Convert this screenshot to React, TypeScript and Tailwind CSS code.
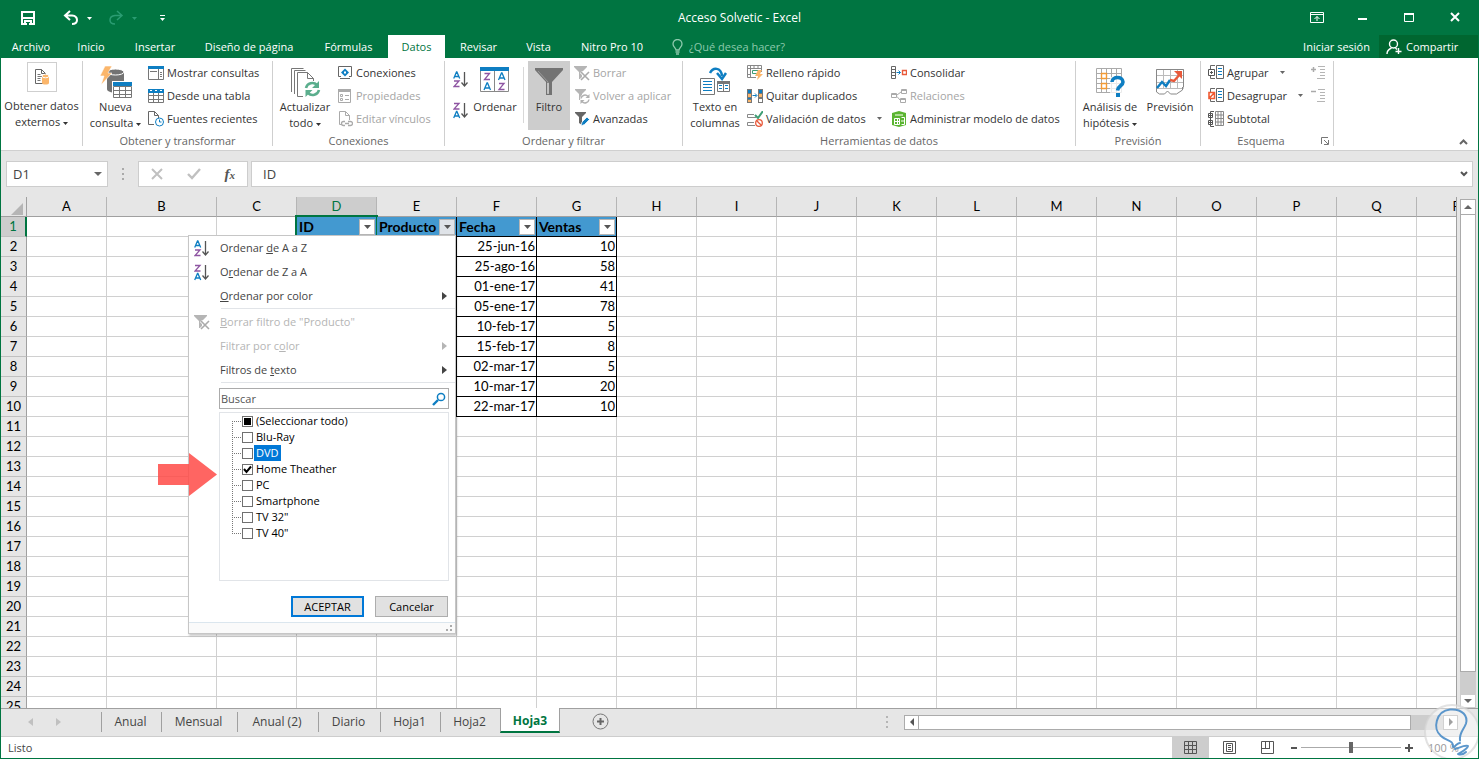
import type { ReactNode } from 'react';
import clsx from 'clsx';

interface IconProps {
  children: ReactNode;
  width?: number;
  height?: number;
}

const Icon = ({ children, width = 16, height = 16 }: IconProps) => (
  <svg width={width} height={height} viewBox={`0 0 ${width} ${height}`} fill="none" className="shrink-0" aria-hidden="true">
    {children}
  </svg>
);

const Caret = () => (
  <svg width="5" height="3" viewBox="0 0 5 3" className="inline-block shrink-0 align-middle" aria-hidden="true">
    <path d="M0 0h5L2.5 3z" fill="currentColor" />
  </svg>
);

const SaveIcon = () => (
  <Icon>
    <path d="M2 2h12v12H2z" stroke="#fff" strokeWidth="2" />
    <path d="M2 8h12M5 11h6v3H5z" stroke="#fff" strokeWidth="2" />
    <path d="M7 12h2v3H7z" fill="#007541" />
  </Icon>
);

const UndoIcon = () => (
  <Icon>
    <path d="M7 1 2 5.500 7 10M2.500 5.500H9q5 .5 5 4.500t-5 4" stroke="currentColor" strokeWidth="2" />
  </Icon>
);

const RedoIcon = () => (
  <Icon>
    <path d="m9 1 5 4.500L9 10M13.500 5.500H7Q2 6 2 10t5 4" stroke="currentColor" strokeWidth="1.500" />
  </Icon>
);

const ExternalDataIcon = () => (
  <Icon width={18} height={18}>
    <path d="M2.500 1.500h6l4 4v10h-10zM8.500 1.500v4h4" stroke="#666" />
    <path d="M4.500 6.500h3M4.500 8.500h5M4.500 10.500h3M4.500 12.500h3" stroke="#777" />
    <path d="M9 8v7c0 2 7 2 7 0V8z" fill="#fbb66b" />
    <ellipse cx="12.500" cy="8" rx="3.500" ry="1.800" fill="#fbb66b" stroke="#fff" />
  </Icon>
);

const NewQueryIcon = () => (
  <Icon width={32} height={32}>
    <path d="M7 6v17c0 5 17 5 17 0V6z" fill="#737373" />
    <ellipse cx="15.500" cy="6" rx="8.500" ry="3" fill="#737373" stroke="#fff" strokeWidth="1" />
    <path d="M5 0h7L8 7h4L1 19l3-9H0z" fill="#fbb66b" stroke="#fff" strokeWidth=".6" />
    <path d="M12 15h20v17H12z" fill="#fff" />
    <path d="M13.500 20.500h18v11h-18zM19.500 20v11M25.500 20v11M13 24.500h18M13 28.500h18" stroke="#777" />
    <path d="M13 16h19v4H13z" fill="#0e7ec2" />
  </Icon>
);

const ShowQueriesIcon = () => (
  <Icon>
    <path d="M.5 1.500h15v13H.5zM10.500 4v10M2 6.500h7M12 7.500h2M12 9.500h2M12 11.500h2" stroke="#777" />
    <path d="M0 1h16v3H0z" fill="#0e7ec2" />
  </Icon>
);

const FromTableIcon = () => (
  <Icon>
    <path d="M.5 1.500h15v13H.5zM5.500 4v10M10.500 4v10M0 7.500h16M0 11.500h16" stroke="#777" />
    <path d="M0 1h16v4H0z" fill="#0e7ec2" />
    <path d="M2 2.500h2M7 2.500h2M12 2.500h2" stroke="#fff" />
  </Icon>
);

const RecentSourcesIcon = () => (
  <Icon>
    <path d="M6 13.500H.5V.5h6l4 4V7M6.500.5v4h4" stroke="#666" />
    <circle cx="11.500" cy="11" r="4" fill="#fff" stroke="#0e7ec2" />
    <path d="M11.500 8.500V11h2" stroke="#0e7ec2" />
  </Icon>
);

const RefreshAllIcon = () => (
  <Icon width={32} height={32}>
    <path d="M2.500 26V2.500h12M5.500 28V4.500h11M14 30.500H8.500v-24h10l6 6V15M18.500 6.500v6h6" stroke="#777" />
    <path d="M17 22a6.500 6.500 0 0 1 11-3M30 24a6.500 6.500 0 0 1-11 3" stroke="#5bae8d" strokeWidth="2.600" />
    <path d="M30 15v7h-7zM16.500 31v-7h7z" fill="#5bae8d" />
  </Icon>
);

const ConnectionsIcon = () => (
  <Icon>
    <path d="M4 11.500H1.500v-10h13v10H12M3 13.500h10" stroke="#666" />
    <path d="m8 3.500 2 2 2 2-4 4-4-4z" fill="#0e7ec2" />
    <path d="M7 6.500h2v2H7z" fill="#fff" />
  </Icon>
);

const PropertiesIcon = () => (
  <Icon>
    <path d="M1.500 1.500h12v13h-12z" stroke="#aaa" />
    <path d="M1 1h13v3H1z" fill="#aaa" />
    <path d="M3.500 6.500h2v2h-2zM3.500 10.500h2v2h-2zM8 7.500h4M8 11.500h4" stroke="#aaa" />
  </Icon>
);

const EditLinksIcon = () => (
  <Icon>
    <path d="M5 13.500H2.500V.5h6l4 4V9M8.500.5v4h4" stroke="#aaa" />
    <path d="M8 10.500H6.500a2 2 0 0 0 0 4H8M11 10.500h2.500a2 2 0 0 1 0 4H11M8 12.500h4" stroke="#aaa" strokeWidth="1.300" />
  </Icon>
);

const SortIcon = ({ reverse = false }: { reverse?: boolean }) => (
  <Icon width={15} height={17}>
    <path
      d={reverse ? 'm.7 16 2.800-6.500h.4l2.800 6.500M1.700 14h4' : 'm.7 7.500 2.800-6.500h.4l2.800 6.500M1.700 5.500h4'}
      stroke="#0e7ec2"
      strokeWidth="1.300"
    />
    <path d={reverse ? 'M1 1.500h5L1 7h5.500' : 'M1 10h5l-5 5.500h5.500'} stroke="#8e55a2" strokeWidth="1.300" />
    <path d="M11.500 1v13M8.500 11.500l3 3.500 3-3.500" stroke="#555" strokeWidth="1.300" />
  </Icon>
);

const SortDialogIcon = () => (
  <Icon width={30} height={30}>
    <path d="M.5 1.500h28v23H.5zM14.500 4v20" stroke="#888" />
    <path d="M0 0h29v4H0z" fill="#0e7ec2" />
    <path d="M4.500 6.500h5l-5 6H10M19 16.500h5l-5 6h5.500" stroke="#8e55a2" strokeWidth="1.300" />
    <path d="m4 23 3-7h.5l3 7M5 21h4.500M18.500 13l3-7h.5l3 7M19.500 11h4.500" stroke="#0e7ec2" strokeWidth="1.300" />
  </Icon>
);

const FilterIcon = () => (
  <Icon width={28} height={30}>
    <path d="M0 1h28v2L17 15v13h-6V15L0 3z" fill="#737373" />
    <path d="m3 4 10 11v11" stroke="#999" />
    <path d="M13 16v11" stroke="#fff" />
  </Icon>
);

const ClearFilterIcon = () => (
  <Icon>
    <path d="M0 1h13v1L8 7v7H5V7L0 2z" fill="#b5b5b5" />
    <path d="m7 7 8 8M15 7l-8 8" stroke="#fff" strokeWidth="3" />
    <path d="m7 7 8 8M15 7l-8 8" stroke="#aaa" strokeWidth="1.600" />
  </Icon>
);

const ReapplyIcon = () => (
  <Icon>
    <path d="M1 1h11v1L8 6v6H5V6L1 2z" fill="#b5b5b5" />
    <circle cx="11" cy="11" r="5" fill="#fff" />
    <path d="M7 10.500a4 4 0 0 1 7-2M15 11.500a4 4 0 0 1-7 2" stroke="#b0b0b0" strokeWidth="1.500" />
    <path d="M15.500 6v4h-4zM6.500 16v-4h4z" fill="#b0b0b0" />
  </Icon>
);

const AdvancedIcon = () => (
  <Icon>
    <path d="M1 1h11v1L8 6v8l-3-2V6L1 2z" fill="#666" />
    <path d="m7 15 1-4 5-5 2.500 2.500-5 5z" fill="#0e7ec2" stroke="#fff" strokeWidth=".8" />
  </Icon>
);

const TextToColumnsIcon = () => (
  <Icon width={32} height={30}>
    <path d="M1.500 11.500h14v16h-14z" stroke="#777" />
    <path d="M4 14.500h9M4 17.500h9M4 20.500h9M4 23.500h9" stroke="#0e7ec2" />
    <path d="M18.500 14.500h12v10h-12zM24.500 15v9" stroke="#777" />
    <path d="M18 14h13v3H18z" fill="#777" />
    <path d="M20 18.500h3M26 18.500h3M20 21.500h3M26 21.500h3" stroke="#0e7ec2" />
    <path d="M11 6c3-6 11-6 12 3" stroke="#0e7ec2" strokeWidth="2.500" />
    <path d="m18 6 5 6 4-6" stroke="#0e7ec2" strokeWidth="2.500" />
  </Icon>
);

const FlashFillIcon = () => (
  <Icon>
    <path d="M9 12.500H.5v-12h14V7M0 3.500h14M3.500 0v12M0 9.500h4M7 .5v3M11 .5v3" stroke="#888" />
    <path d="M5.500 5.500h6v3h-6z" stroke="#3e9e74" />
    <path d="M11 5h4l-2 4h3l-6 6 1-4H8z" fill="#fbb66b" />
  </Icon>
);

const RemoveDuplicatesIcon = () => (
  <Icon>
    <path d="M0 1h5v14H0zM11 1h5v14h-5z" fill="#777" />
    <path d="M1 2h3v3H1zM1 10h3v1H1zM12 2h3v3h-3z" fill="#0e7ec2" />
    <path d="M1 6h3v3H1zM1 12h3v2H1zM12 6h3v3h-3z" fill="#fbb66b" />
    <path d="M12 11h3v3h-3z" fill="#fff" />
    <path d="M5.500 7.500h4M8 5.500l2 2-2 2" stroke="#0e7ec2" />
  </Icon>
);

const ValidationIcon = () => (
  <Icon>
    <path d="M9 6.500H.5v-3H7M8 14.500H.5v-3H7" stroke="#888" />
    <path d="m8 4 3 3 5-7" stroke="#3e9e74" strokeWidth="2" />
    <circle cx="12" cy="12" r="3.300" stroke="#e8593a" strokeWidth="1.300" />
    <path d="m9.700 9.700 4.600 4.600" stroke="#e8593a" strokeWidth="1.300" />
  </Icon>
);

const ConsolidateIcon = () => (
  <Icon>
    <path d="M.5 1.500h4v12h-4zM0 4.500h5M0 7.500h5M0 10.500h5" stroke="#666" />
    <path d="M5.500 7.500h4M7.500 5.500l2 2-2 2" stroke="#0e7ec2" />
    <path d="M11.500 5.500h4v4h-4z" stroke="#e8593a" strokeWidth="1.400" />
  </Icon>
);

const RelationsIcon = () => (
  <Icon>
    <path d="M.5 5.500h5v4h-5zM10.500 1.500h5v4h-5zM9.500 10.500h5v4h-5zM6 7l4-3M6 8.500l3 3.500M10 2.500h5M0 6.500h5M9 11.500h5" stroke="#aaa" />
  </Icon>
);

const DataModelIcon = () => (
  <Icon>
    <path d="m8 0 7 2v12l-7 2-7-2V2z" fill="#5bb531" />
    <path d="M3.500 7.500h5v6h-5zM3 10.500h5M6.500 7v6M10.500 6.500h3v7h-3M10 10h4" stroke="#fff" />
    <path d="M4 4h8" stroke="#c8eab5" strokeWidth="1.500" />
  </Icon>
);

const WhatIfIcon = () => (
  <Icon width={32} height={32}>
    <path d="M2.500 2.500h25v24h-25zM7.500 2v24M12.500 2v24M17.500 2v24M22.500 2v24M2 7.500h25M2 12.500h25M2 17.500h25M2 22.500h25" stroke="#aaa" />
    <path d="M7.500 7.500h5v5h-5zM7.500 17.500h5v5h-5z" fill="#fff" stroke="#f39a33" strokeWidth="1.400" />
    <path d="M16 11h15v20H16z" fill="#fff" opacity=".75" />
    <path d="M18 16c0-6 11-6 11 0 0 4-5 3.500-5.500 8.500" stroke="#0e7ec2" strokeWidth="3.600" />
    <path d="M22 27h4v4h-4z" fill="#0e7ec2" />
  </Icon>
);

const ForecastIcon = () => (
  <Icon width={32} height={30}>
    <path d="M2.500 2.500h27v19h-27zM9.500 2v19M16.500 2v19M23.500 2v19M2 8.500h27M2 15.500h27" stroke="#bbb" />
    <path d="M2.500 25V2.500h27V20M2.500 25l3 2h5l3-3 3 3h6l6-4v-3" stroke="#888" />
    <path d="m3 21 5-6 4 4 4-6" stroke="#0e7ec2" strokeWidth="2.400" />
    <path d="m16 13 4 1 7-8" stroke="#e8593a" strokeWidth="2.400" />
    <path d="M20 4h8v8z" fill="#e8593a" />
  </Icon>
);

const OutlineIcon = ({ mode }: { mode: 'group' | 'ungroup' | 'subtotal' }) => (
  <Icon>
    {mode === 'subtotal' ? (
      <>
        <path d="M7.500.5h8v14h-8zM7 4h9M7 7.500h9M7 11h9M10 0v14M13 0v14" stroke="#888" />
        <path d="M.5 2.500h4v4h-4zM.5 9.500h4v4h-4zM1 4.500h3M2.500 3v3M1 11.500h3M2.500 10v3M2.500 2V.5H6M2.500 7v2M2.500 14v1.500H6" stroke="#555" />
      </>
    ) : (
      <>
        <path d="M8.500.5h7v13h-7zM2.500 4V.5H7M2.500 11v2.500H7" stroke="#666" />
        <path d="M10 3.500h4M10 6.500h4M10 9.500h4" stroke="#0e7ec2" />
        {mode === 'group' ? (
          <path d="M.5 4.500h6v6h-6zM2 7.500h3M3.500 6v3" stroke="#555" />
        ) : (
          <path d="M1 4.500h5.500v6H1zM1 10.500l5.500-6" stroke="#f05a32" strokeWidth="1.600" />
        )}
      </>
    )}
  </Icon>
);

const DetailIcon = ({ hide = false }: { hide?: boolean }) => (
  <Icon>
    <path d={hide ? 'M1 3.500h5' : 'M1 4.500h5M3.500 2v5'} stroke="#aaa" strokeWidth="1.500" />
    <path d="M8 1.500h7M10 4.500h5M10 7.500h5M10 10.500h5M7 13.500h8" stroke="#b5b5b5" />
  </Icon>
);

interface CommandProps {
  icon: ReactNode;
  label: string;
  disabled?: boolean;
  caret?: boolean;
}

const Command = ({ icon, label, disabled, caret }: CommandProps) => (
  <button
    type="button"
    disabled={disabled}
    className="flex h-[23px] items-center gap-[3px] whitespace-nowrap text-[#333] disabled:text-[#a5a5a5]"
  >
    {icon}
    {label}
    {caret ? <span className="ml-2 flex text-[#666]"><Caret /></span> : null}
  </button>
);

interface BigCommandProps {
  icon: ReactNode;
  lines: string[];
  caret?: boolean;
  className?: string;
}

const BigCommand = ({ icon, lines, caret, className }: BigCommandProps) => (
  <button type="button" className={clsx('flex shrink-0 flex-col items-center whitespace-nowrap pt-1 leading-4 text-[#333]', className)}>
    <span className="flex h-[34px] items-center">{icon}</span>
    {lines.map((line, index) => (
      <span key={line}>
        {line}
        {caret && index === lines.length - 1 ? <> <Caret /></> : null}
      </span>
    ))}
  </button>
);

interface GroupProps {
  label?: string;
  className?: string;
  launcher?: boolean;
  children: ReactNode;
}

const Group = ({ label, className, launcher, children }: GroupProps) => (
  <section className={clsx('mb-1 mt-[3px] flex shrink-0 flex-col border-r border-[#cfcfcf]', className)}>
    <div className="flex h-[74px] items-start">{children}</div>
    <div className="flex h-[11px] items-center leading-3 text-[#666]">
      <span className="flex-1 text-center">{label}</span>
      {launcher ? (
        <button type="button" aria-label="Configuración de esquema" className="mr-1 w-2">
          <Icon width={8} height={8}>
            <path d="M.5 7V.5H7M3 3l4 4M7.500 3v4.500H3" stroke="#777" />
          </Icon>
        </button>
      ) : null}
    </div>
  </section>
);

const TABS = [
  { name: 'Archivo', width: 'w-[60px]' },
  { name: 'Inicio', width: 'w-[60px]' },
  { name: 'Insertar', width: 'w-[68px]' },
  { name: 'Diseño de página', width: 'w-[120px]' },
  { name: 'Fórmulas', width: 'w-[79px]' },
  { name: 'Datos', width: 'w-[57px]', active: true },
  { name: 'Revisar', width: 'w-[67px]' },
  { name: 'Vista', width: 'w-[53px]' },
  { name: 'Nitro Pro 10', width: 'w-[94px]' },
];

const TitleBar = () => (
  <header className="bg-[#007541] text-white">
    <div className="flex h-[34px] items-center">
      <div className="flex flex-1 items-center">
        <button type="button" aria-label="Guardar" className="ml-[19px]"><SaveIcon /></button>
        <button type="button" aria-label="Deshacer" className="ml-[27px] flex items-center gap-2"><UndoIcon /><Caret /></button>
        <button type="button" aria-label="Rehacer" className="ml-4 flex items-center gap-2 text-[#2a9c72]"><RedoIcon /><Caret /></button>
        <button type="button" aria-label="Personalizar" className="ml-[22px]">
          <Icon width={7} height={8}><path d="M1 1.500h5" stroke="#fff" /><path d="M1 4h5L3.500 7z" fill="#fff" /></Icon>
        </button>
      </div>
      <h1 className="text-[12px]">Acceso Solvetic - Excel</h1>
      <div className="flex flex-1 justify-end">
        <button type="button" aria-label="Opciones de presentación" className="flex w-[46px] justify-center">
          <Icon width={14} height={12}><path d="M.5.5h13v10H.5zM1 2.500h12M7 9V4.500M4.500 7 7 4.500 9.500 7" stroke="#fff" /></Icon>
        </button>
        <button type="button" aria-label="Minimizar" className="flex w-[46px] justify-center">
          <Icon width={10} height={12}><path d="M0 7h9" stroke="#fff" strokeWidth="2" /></Icon>
        </button>
        <button type="button" aria-label="Maximizar" className="flex w-[46px] justify-center">
          <Icon width={10} height={12}><path d="M.5 1.500h9v8h-9z" stroke="#fff" /><path d="M0 1h10v2H0z" fill="#fff" /></Icon>
        </button>
        <button type="button" aria-label="Cerrar" className="flex w-[46px] justify-center">
          <Icon width={10} height={12}><path d="m1 1 8 8M9 1 1 9" stroke="#fff" strokeWidth="2" /></Icon>
        </button>
      </div>
    </div>
    <div className="flex h-[23px] items-stretch">
      <nav className="flex">
        {TABS.map((tab) => (
          <button
            key={tab.name}
            type="button"
            className={clsx('shrink-0 whitespace-nowrap text-center', tab.width, tab.active && 'bg-white text-[#007541]')}
          >
            {tab.name}
          </button>
        ))}
      </nav>
      <label className="ml-3 flex flex-1 items-center gap-1">
        <Icon width={14}>
          <path d="M5 11c0-2-3-3-3-6a4.500 4.500 0 0 1 9 0c0 3-3 4-3 6zM4.500 13h4M5 15h3" stroke="#8cc9ac" strokeWidth="1.300" />
        </Icon>
        <input placeholder="¿Qué desea hacer?" className="w-40 bg-transparent outline-none placeholder:text-[#8cc9ac]" />
      </label>
      <button type="button" className="mr-[9px] whitespace-nowrap">Iniciar sesión</button>
      <button type="button" className="flex w-[99px] items-center gap-1 whitespace-nowrap bg-[#006630] pl-[7px]">
        <Icon>
          <circle cx="7.500" cy="5" r="4" stroke="#fff" strokeWidth="1.400" />
          <path d="M1 15c0-3 2-5 4.500-6M9.500 9l1.500 1.500M12.500 9v6M9.500 12.500h6" stroke="#fff" strokeWidth="1.400" />
        </Icon>
        Compartir
      </button>
    </div>
  </header>
);

const Ribbon = () => (
  <div className="flex h-[93px] border-b border-[#d0d0d0] bg-white">
    <Group className="w-[82px]">
      <button type="button" className="flex w-full flex-col items-center whitespace-nowrap pt-px leading-4 text-[#333]">
        <span className="mb-[6px] flex size-[30px] items-center justify-center border border-[#cfcfcf]"><ExternalDataIcon /></span>
        <span>Obtener datos</span>
        <span>externos <Caret /></span>
      </button>
    </Group>
    <Group className="w-[190px]" label="Obtener y transformar">
      <BigCommand className="w-[65px]" icon={<NewQueryIcon />} lines={['Nueva', 'consulta']} caret />
      <div>
        <Command icon={<ShowQueriesIcon />} label="Mostrar consultas" />
        <Command icon={<FromTableIcon />} label="Desde una tabla" />
        <Command icon={<RecentSourcesIcon />} label="Fuentes recientes" />
      </div>
    </Group>
    <Group className="w-[172px]" label="Conexiones">
      <BigCommand className="w-16" icon={<RefreshAllIcon />} lines={['Actualizar', 'todo']} caret />
      <div>
        <Command icon={<ConnectionsIcon />} label="Conexiones" />
        <Command icon={<PropertiesIcon />} label="Propiedades" disabled />
        <Command icon={<EditLinksIcon />} label="Editar vínculos" disabled />
      </div>
    </Group>
    <Group className="w-[238px]" label="Ordenar y filtrar">
      <div className="flex w-[26px] flex-col gap-[14px] pl-2 pt-[10px]">
        <button type="button" aria-label="Ordenar de A a Z"><SortIcon /></button>
        <button type="button" aria-label="Ordenar de Z a A"><SortIcon reverse /></button>
      </div>
      <BigCommand className="w-12" icon={<SortDialogIcon />} lines={['Ordenar']} />
      <div className="ml-1 mt-[6px] h-14 border-l border-[#d8d8d8]" />
      <BigCommand className="ml-1 h-[69px] w-[42px] bg-[#cdcdcd]" icon={<FilterIcon />} lines={['Filtro']} />
      <div className="ml-1">
        <Command icon={<ClearFilterIcon />} label="Borrar" disabled />
        <Command icon={<ReapplyIcon />} label="Volver a aplicar" disabled />
        <Command icon={<AdvancedIcon />} label="Avanzadas" />
      </div>
    </Group>
    <Group className="w-[393px]" label="Herramientas de datos">
      <BigCommand className="w-16" icon={<TextToColumnsIcon />} lines={['Texto en', 'columnas']} />
      <div className="w-36">
        <Command icon={<FlashFillIcon />} label="Relleno rápido" />
        <Command icon={<RemoveDuplicatesIcon />} label="Quitar duplicados" />
        <Command icon={<ValidationIcon />} label="Validación de datos" caret />
      </div>
      <div>
        <Command icon={<ConsolidateIcon />} label="Consolidar" />
        <Command icon={<RelationsIcon />} label="Relaciones" disabled />
        <Command icon={<DataModelIcon />} label="Administrar modelo de datos" />
      </div>
    </Group>
    <Group className="w-[125px]" label="Previsión">
      <BigCommand className="w-[68px]" icon={<WhatIfIcon />} lines={['Análisis de', 'hipótesis']} caret />
      <BigCommand className="w-[52px]" icon={<ForecastIcon />} lines={['Previsión']} />
    </Group>
    <Group className="w-[133px]" label="Esquema" launcher>
      <div className="w-[103px] pl-[7px]">
        <Command icon={<OutlineIcon mode="group" />} label="Agrupar" caret />
        <Command icon={<OutlineIcon mode="ungroup" />} label="Desagrupar" caret />
        <Command icon={<OutlineIcon mode="subtotal" />} label="Subtotal" />
      </div>
      <div className="pl-[6px]">
        <button type="button" disabled aria-label="Mostrar detalle" className="flex h-[23px] items-center"><DetailIcon /></button>
        <button type="button" disabled aria-label="Ocultar detalle" className="flex h-[23px] items-center"><DetailIcon hide /></button>
      </div>
    </Group>
    <div className="flex flex-1 items-end justify-end pb-1 pr-[10px]">
      <button type="button" aria-label="Contraer la cinta">
        <Icon width={9} height={8}><path d="m1 6 3.500-3.500L8 6" stroke="#666" strokeWidth="2" /></Icon>
      </button>
    </div>
  </div>
);

const FormulaBar = () => (
  <div className="flex items-center px-[5px] py-[10px]">
    <div className="flex h-[26px] w-[102px] items-center border border-[#cdcdcd] bg-white pr-[5px]">
      <input aria-label="Cuadro de nombres" defaultValue="D1" className="w-full min-w-0 pl-[6px] text-[13px] text-[#444] outline-none" />
      <Icon width={8} height={5}><path d="M0 0h8L4 4z" fill="#666" /></Icon>
    </div>
    <span className="flex w-[30px] justify-center">
      <Icon width={2} height={12}><path d="M0 1h2M0 6h2M0 11h2" stroke="#aaa" strokeWidth="2" /></Icon>
    </span>
    <div className="flex h-[26px] w-[110px] items-center justify-around border border-[#cdcdcd] bg-white">
      <button type="button" aria-label="Cancelar edición"><Icon width={12} height={12}><path d="m1 1 10 10M11 1 1 11" stroke="#c0c0c0" strokeWidth="2" /></Icon></button>
      <button type="button" aria-label="Introducir"><Icon width={14} height={12}><path d="m1 6 4 4 8-9" stroke="#c0c0c0" strokeWidth="2.400" /></Icon></button>
      <button type="button" className="font-['Liberation_Serif'] text-[15px] font-bold italic leading-4 text-[#555]">
        f<span className="text-[11px]">x</span>
      </button>
    </div>
    <label className="ml-[3px] flex h-[26px] flex-1 items-center border border-[#cdcdcd] bg-white pr-1">
      <input aria-label="Barra de fórmulas" defaultValue="ID" className="min-w-0 flex-1 pl-[11px] text-[13px] text-[#444] outline-none" />
      <Icon width={8} height={7}><path d="m1 1 3 3 3-3" stroke="#555" strokeWidth="2" /></Icon>
    </label>
  </div>
);

const COLUMNS = 'ABCDEFGHIJKLMNOPQR'.split('');
const ROW_COUNT = 25;

const DATA: Record<number, { fecha: string; ventas: number }> = {
  2: { fecha: '25-jun-16', ventas: 10 },
  3: { fecha: '25-ago-16', ventas: 58 },
  4: { fecha: '01-ene-17', ventas: 41 },
  5: { fecha: '05-ene-17', ventas: 78 },
  6: { fecha: '10-feb-17', ventas: 5 },
  7: { fecha: '15-feb-17', ventas: 8 },
  8: { fecha: '02-mar-17', ventas: 5 },
  9: { fecha: '10-mar-17', ventas: 20 },
  10: { fecha: '22-mar-17', ventas: 10 },
};

const HEADINGS: Record<string, string> = { D: 'ID', E: 'Producto', F: 'Fecha', G: 'Ventas' };

const HeadingCell = ({ column }: { column: string }) => (
  <td
    className={clsx(
      'relative border-b border-r border-black bg-[#4399d0] p-0 pl-[2px] text-left text-[14px] font-bold text-black',
      column === 'D' && 'border-r-[#4399d0]'
    )}
  >
    <div className="flex items-center justify-between pr-px">
      {HEADINGS[column]}
      <button
        type="button"
        aria-label={`Filtrar ${HEADINGS[column]}`}
        className={clsx('flex size-4 items-center justify-center border border-[#b5b5b5]', column === 'E' ? 'bg-[#dfe3e8]' : 'bg-white')}
      >
        <Icon width={7} height={4}><path d="M0 0h7L3.500 4z" fill="#555" /></Icon>
      </button>
    </div>
    {column === 'D' ? (
      <span className="pointer-events-none absolute -inset-[2px] border-2 border-[#007541]" />
    ) : null}
  </td>
);

const Cell = ({ column, row }: { column: string; row: number }) => {
  if (row === 1 && HEADINGS[column]) return <HeadingCell column={column} />;

  const record = DATA[row];
  if (record && HEADINGS[column]) {
    return (
      <td className="border-b border-r border-black p-0 pr-px text-right text-black">
        {column === 'F' ? record.fecha : null}
        {column === 'G' ? record.ventas : null}
      </td>
    );
  }
  return <td className="border-b border-r border-[#d0d0d0] p-0" />;
};

const Grid = () => (
  <table className="w-[1496px] table-fixed border-separate border-spacing-0 bg-white font-['Lato',sans-serif] text-[13px] leading-[19px]">
    <colgroup>
      <col className="w-[26px]" />
      {COLUMNS.map((column) => (
        <col key={column} className={column === 'B' ? 'w-[110px]' : 'w-20'} />
      ))}
    </colgroup>
    <thead>
      <tr className="h-5">
        <th className="border-b border-r border-[#a0a0a0] bg-[#e6e6e6] p-0">
          <span className="flex justify-end pr-[3px] pt-1">
            <Icon width={12} height={12}><path d="M12 0v12H0z" fill="#b5b5b5" /></Icon>
          </span>
        </th>
        {COLUMNS.map((column) => (
          <th
            key={column}
            scope="col"
            className={clsx(
              'border-b border-r border-b-[#a0a0a0] border-r-[#b5b5b5] p-0 font-normal',
              column === 'D' ? 'bg-[#cdcdcd] text-[#007541]' : 'bg-[#e6e6e6] text-black'
            )}
          >
            {column}
          </th>
        ))}
      </tr>
    </thead>
    <tbody>
      {Array.from({ length: ROW_COUNT }, (_, index) => index + 1).map((row) => (
        <tr key={row} className="h-5">
          <th
            scope="row"
            className={clsx(
              'border-b border-b-[#c0c0c0] p-0 font-normal',
              row === 1 ? 'border-r-2 border-r-[#007541] bg-[#cdcdcd] text-[#007541]' : 'border-r border-r-[#a0a0a0] bg-[#e6e6e6] text-black'
            )}
          >
            {row}
          </th>
          {COLUMNS.map((column) => <Cell key={column} column={column} row={row} />)}
        </tr>
      ))}
    </tbody>
  </table>
);

const MenuItem = ({ icon, children, submenu, disabled }: { icon?: ReactNode; children: ReactNode; submenu?: boolean; disabled?: boolean }) => (
  <button type="button" disabled={disabled} className="flex h-6 w-full items-center pr-2 text-left text-[#444] disabled:text-[#b5b5b5]">
    <span className="w-[31px] pl-[5px]">{icon}</span>
    <span className="flex-1">{children}</span>
    {submenu ? <Icon width={5} height={8}><path d="M0 0v8l5-4z" fill="currentColor" /></Icon> : null}
  </button>
);

const OPTIONS = [
  { label: '(Seleccionar todo)', state: 'mixed' },
  { label: 'Blu-Ray' },
  { label: 'DVD', highlighted: true },
  { label: 'Home Theather', state: 'checked' },
  { label: 'PC' },
  { label: 'Smartphone' },
  { label: 'TV 32"' },
  { label: 'TV 40"' },
];

const FilterMenu = () => (
  <div className="absolute left-[187px] top-[38px] w-[268px] border border-[#c6c6c6] bg-white shadow-[1px_2px_2px_rgba(0,0,0,0.2)]">
    <MenuItem icon={<SortIcon />}>Ordenar <u>d</u>e A a Z</MenuItem>
    <MenuItem icon={<SortIcon reverse />}>O<u>r</u>denar de Z a A</MenuItem>
    <MenuItem submenu><u>O</u>rdenar por color</MenuItem>
    <hr className="mb-px ml-8 border-[#e1e4e8]" />
    <MenuItem icon={<ClearFilterIcon />} disabled><u>B</u>orrar filtro de "Producto"</MenuItem>
    <MenuItem submenu disabled>Filtrar por c<u>o</u>lor</MenuItem>
    <MenuItem submenu>Filtros de <u>t</u>exto</MenuItem>
    <hr className="ml-8 border-[#e1e4e8]" />
    <div className="ml-[30px] mr-[6px] mt-[5px]">
      <label className="flex h-[21px] items-center border border-[#ababab] pr-[2px]">
        <input aria-label="Buscar" placeholder="Buscar" className="min-w-0 flex-1 pl-px outline-none placeholder:text-[#555]" />
        <Icon width={14} height={14}>
          <circle cx="9" cy="5" r="3.600" stroke="#0e7ec2" strokeWidth="1.500" />
          <path d="m6 8-5 5" stroke="#0e7ec2" strokeWidth="2.400" />
        </Icon>
      </label>
      <ul className="mt-[3px] h-[169px] border border-[#e1e4e8] pl-3 text-black">
        {OPTIONS.map((option, index) => (
          <li key={option.label} className="flex h-4 items-center">
            <Icon width={10} height={16}>
              <path
                d={index === 0 ? 'M.5 8v8' : index === OPTIONS.length - 1 ? 'M.5 0v8' : 'M.5 0v16'}
                stroke="#777"
                strokeDasharray="1 1"
              />
              <path d="M0 8.500h9" stroke="#777" strokeDasharray="1 1" />
            </Icon>
            <label className="flex items-center">
              <span className="relative flex">
                <input
                  type="checkbox"
                  defaultChecked={Boolean(option.state)}
                  className="size-[11px] appearance-none border border-[#707070] bg-white"
                />
                {option.state ? (
                  <svg viewBox="0 0 11 11" className="pointer-events-none absolute inset-0 size-[11px]" aria-hidden="true">
                    {option.state === 'mixed' ? (
                      <path d="M2 2h7v7H2z" fill="#000" />
                    ) : (
                      <path d="m2 5 2.500 3L9 2.500" stroke="#000" strokeWidth="2" fill="none" />
                    )}
                  </svg>
                ) : null}
              </span>
              <span className={clsx('ml-px px-[2px] leading-4', option.highlighted && 'bg-[#0078d7] text-white')}>{option.label}</span>
            </label>
          </li>
        ))}
      </ul>
      <div className="mb-[5px] mt-[15px] flex justify-end gap-[11px] pr-px text-black">
        <button type="button" className="h-[21px] w-[73px] border-2 border-[#0078d7] bg-[#e1e1e1]">ACEPTAR</button>
        <button type="button" className="h-[21px] w-[73px] border border-[#adadad] bg-[#e1e1e1]">Cancelar</button>
      </div>
    </div>
    <div className="flex h-[11px] items-end justify-end border-t border-[#dbe6ee] bg-[#fafafa] pb-px pr-[2px]">
      <Icon width={8} height={8}><path d="M5 2h2M1 6h2M5 6h2" stroke="#aaa" strokeWidth="2" /></Icon>
    </div>
  </div>
);

const VerticalScrollbar = () => (
  <div className="ml-[3px] mr-[2px] mt-[2px] flex w-4 flex-col bg-[#cdcdcd]">
    <button type="button" aria-label="Subir" className="flex h-4 items-center justify-center border border-[#ababab] bg-white">
      <Icon width={8} height={4}><path d="M0 4h8L4 0z" fill="#666" /></Icon>
    </button>
    <div className="flex-1 border border-t-0 border-[#ababab] bg-white" />
    <div className="h-[22px]" />
    <button type="button" aria-label="Bajar" className="flex h-[14px] items-center justify-center border border-[#cdcdcd] bg-white">
      <Icon width={8} height={4}><path d="M0 0h8L4 4z" fill="#666" /></Icon>
    </button>
  </div>
);

const Sheet = () => (
  <main className="relative flex min-h-0 flex-1">
    <div className="min-w-0 flex-1 overflow-hidden border-r border-[#a0a0a0]">
      <Grid />
    </div>
    <VerticalScrollbar />
    <FilterMenu />
    <svg width="60" height="43" viewBox="0 0 60 43" className="absolute left-[157px] top-[256px]" aria-hidden="true">
      <path d="M0 11h31V0l28 21.500L31 43V32H0z" fill="#ff4a46" fillOpacity=".85" />
    </svg>
  </main>
);

const SHEETS = [
  { name: 'Anual', width: 'w-[60px]' },
  { name: 'Mensual', width: 'w-[76px]' },
  { name: 'Anual (2)', width: 'w-[81px]' },
  { name: 'Diario', width: 'w-[62px]' },
  { name: 'Hoja1', width: 'w-[60px]' },
  { name: 'Hoja2', width: 'w-[60px]' },
];

const SheetTabs = () => (
  <div className="flex h-[29px] items-start border-b border-[#cdcdcd] text-[12px] text-[#444]">
    <div className="flex h-[27px] w-full items-start border-t border-[#a0a0a0]">
      <div className="flex h-[26px] w-[100px] items-center gap-[23px] pl-[27px] text-[#c0c0c0]">
        <button type="button" aria-label="Hoja anterior"><Icon width={5} height={8}><path d="M5 0v8L0 4z" fill="currentColor" /></Icon></button>
        <button type="button" aria-label="Hoja siguiente"><Icon width={5} height={8}><path d="M0 0v8l5-4z" fill="currentColor" /></Icon></button>
      </div>
      <nav className="flex pt-[3px]">
        {SHEETS.map((sheet) => (
          <button key={sheet.name} type="button" className={clsx('h-5 border-l border-[#a0a0a0] pr-[2px]', sheet.width)}>
            {sheet.name}
          </button>
        ))}
      </nav>
      <button type="button" className="-mt-px h-[25px] w-[60px] border-x border-b-2 border-x-[#a0a0a0] border-b-[#007541] bg-white pt-[3px] font-bold text-[#007541]">
        Hoja3
      </button>
      <button type="button" aria-label="Hoja nueva" className="ml-8 mt-1">
        <Icon width={17} height={17}>
          <circle cx="8.500" cy="8.500" r="7.500" stroke="#777" />
          <path d="M8.500 5v7M5 8.500h7" stroke="#666" strokeWidth="2" />
        </Icon>
      </button>
      <div className="ml-auto mr-5 flex h-[26px] items-center">
        <Icon width={2} height={12}><path d="M0 1h2M0 6h2M0 11h2" stroke="#b5b5b5" strokeWidth="2" /></Icon>
        <div className="ml-4 flex h-[15px] w-[554px] bg-[#cdcdcd]">
          <button type="button" aria-label="Izquierda" className="flex w-[15px] items-center justify-center border border-[#ababab] bg-white">
            <Icon width={4} height={8}><path d="M4 0v8L0 4z" fill="#555" /></Icon>
          </button>
          <div className="w-[492px] border border-l-0 border-[#ababab] bg-white" />
          <div className="flex-1" />
          <button type="button" aria-label="Derecha" className="flex w-[15px] items-center justify-center border border-[#ababab] bg-white">
            <Icon width={4} height={8}><path d="M0 0v8l4-4z" fill="#555" /></Icon>
          </button>
        </div>
      </div>
    </div>
  </div>
);

const StatusBar = () => (
  <footer className="flex h-[21px] items-center bg-white pl-[7px] text-[#444]">
    <span className="flex-1">Listo</span>
    <button type="button" aria-label="Normal" className="flex h-full w-[37px] items-center justify-center bg-[#cdcdcd]">
      <Icon width={13} height={13}><path d="M.5.500h12v12H.5zM4.500 0v13M8.500 0v13M0 4.500h13M0 8.500h13" stroke="#555" /></Icon>
    </button>
    <button type="button" aria-label="Diseño de página" className="flex w-10 justify-center">
      <Icon width={13} height={13}><path d="M.5.500h12v12H.5zM3.500 2.500h6v8h-6zM5 4.500h3M5 6.500h3M5 8.500h3" stroke="#555" /></Icon>
    </button>
    <button type="button" aria-label="Vista previa de salto de página" className="flex w-9 justify-center">
      <Icon width={13} height={13}><path d="M.5.500h12v12H.5zM4.500 1v6M8.500 1v6M1 7.500h8" stroke="#555" /></Icon>
    </button>
    <button type="button" aria-label="Alejar" className="ml-[6px]"><Icon width={6} height={8}><path d="M0 4h6" stroke="#555" strokeWidth="2" /></Icon></button>
    <input
      type="range"
      aria-label="Zoom"
      className="mx-1 h-[11px] w-[100px] appearance-none bg-[linear-gradient(#aaa,#aaa)] bg-[length:100%_1px] bg-center bg-no-repeat [&::-webkit-slider-thumb]:h-[11px] [&::-webkit-slider-thumb]:w-1 [&::-webkit-slider-thumb]:appearance-none [&::-webkit-slider-thumb]:bg-[#666]"
    />
    <button type="button" aria-label="Acercar"><Icon width={8} height={8}><path d="M0 4h8M4 0v8" stroke="#555" strokeWidth="2" /></Icon></button>
    <span className="ml-[15px] w-[50px]">100 %</span>
  </footer>
);

const Watermark = () => (
  <svg width="54" height="54" viewBox="0 0 54 54" className="pointer-events-none absolute bottom-0 right-0" aria-hidden="true">
    <circle cx="28" cy="28" r="27" fill="#fff" fillOpacity=".45" stroke="#d5d5d5" strokeOpacity=".7" strokeWidth="2" />
    <path
      d="M29 43c1-7-7-6-12-11C8 25 12 7 26 5.500c13-1 18 7 16 14-2 6-7 9-6 17M30 43c2-2 4-4 6-4M31 45c5-1 8-4 13-3-1 4-6 5-10 8 3 1 6 0 8-2"
      fill="none"
      stroke="#4a8cc7"
      strokeWidth="2"
      strokeLinecap="round"
      strokeLinejoin="round"
      opacity=".9"
    />
  </svg>
);

export default function App() {
  return (
    <div className="relative flex h-screen flex-col overflow-hidden border border-[#007541] bg-[#e6e6e6] font-['Open_Sans',sans-serif] text-[11px] leading-4">
      <TitleBar />
      <Ribbon />
      <FormulaBar />
      <Sheet />
      <SheetTabs />
      <StatusBar />
      <Watermark />
    </div>
  );
}
